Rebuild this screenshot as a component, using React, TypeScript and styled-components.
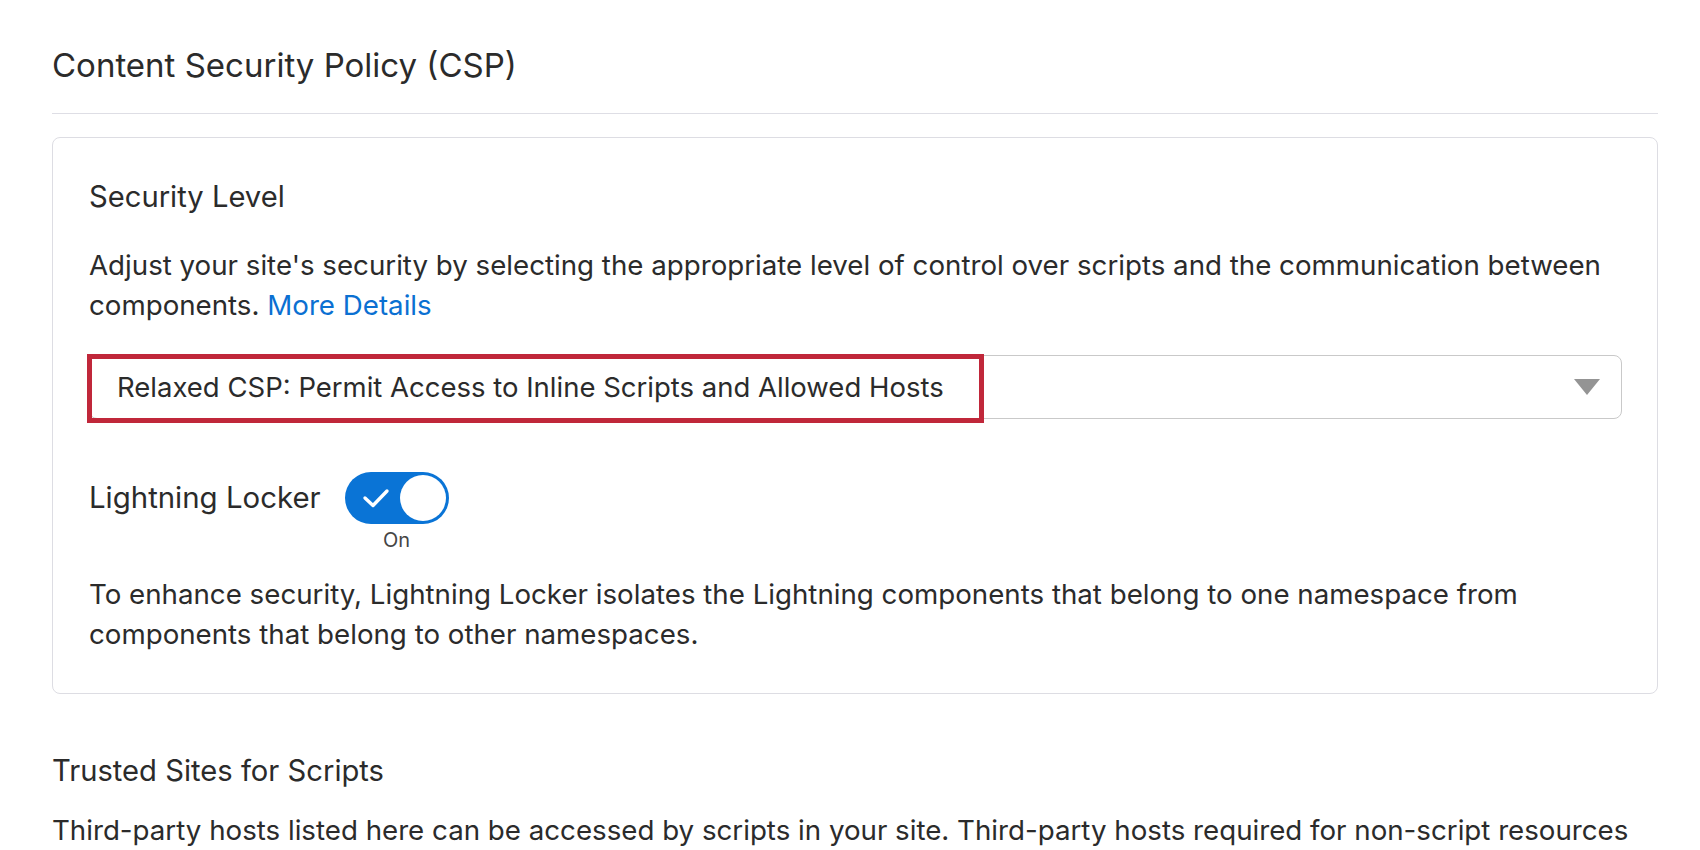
import React from 'react';
import styled, { createGlobalStyle } from 'styled-components';

const GlobalStyle = createGlobalStyle`
  html, body {
    margin: 0;
    padding: 0;
    background: #ffffff;
  }
  body {
    font-family: Inter, "Liberation Sans", Arial, sans-serif;
    color: #2b2b2b;
    -webkit-font-smoothing: antialiased;
  }
`;

const Page = styled.div`
  box-sizing: border-box;
  height: 850px;
  overflow: hidden;
  padding: 45px 42px 0 52px;
`;

const Title = styled.h1`
  margin: 0;
  font-size: 33px;
  font-weight: 400;
  line-height: 40px;
`;

const Divider = styled.div`
  height: 1px;
  margin-top: 28px;
  background: #dedee5;
`;

const Card = styled.section`
  margin-top: 23px;
  border: 1px solid #dddde3;
  border-radius: 8px;
  padding: 39px 35px 39px 36px;
`;

const SectionTitle = styled.h2<{ $gap?: number }>`
  margin: ${p => p.$gap ?? 0}px 0 0;
  font-size: 29.2px;
  font-weight: 400;
  line-height: 40px;
`;

const Text = styled.p<{ $gap: number }>`
  margin: ${p => p.$gap}px 0 0;
  font-size: 27.7px;
  line-height: 40px;
`;

const Link = styled.a`
  color: #0b70d2;
  text-decoration: none;
`;

const Select = styled.div`
  position: relative;
  box-sizing: border-box;
  display: flex;
  align-items: center;
  justify-content: space-between;
  height: 64px;
  margin-top: 30px;
  padding: 0 21px 0 27px;
  border: 1px solid #c9c9c9;
  border-radius: 8px;
  font-size: 27.5px;
`;

const Highlight = styled.span`
  position: absolute;
  left: -3px;
  top: -2px;
  width: 897px;
  height: 69px;
  box-sizing: border-box;
  border: 5px solid #c0273a;
  pointer-events: none;
`;

const ToggleRow = styled.div`
  display: flex;
  align-items: flex-start;
  gap: 24px;
  margin-top: 53px;
`;

const ToggleLabel = styled.span`
  font-size: 29.4px;
  line-height: 52px;
`;

const ToggleColumn = styled.div`
  display: flex;
  flex-direction: column;
  align-items: center;
`;

const Track = styled.div<{ $on: boolean }>`
  box-sizing: border-box;
  display: flex;
  align-items: center;
  justify-content: ${p => (p.$on ? 'space-between' : 'flex-start')};
  width: 104px;
  height: 52px;
  padding: 0 3px 0 17px;
  border-radius: 26px;
  background: ${p => (p.$on ? '#0a74d6' : '#c9c9c9')};
`;

const Knob = styled.span`
  width: 46px;
  height: 46px;
  border-radius: 50%;
  background: #ffffff;
`;

const ToggleState = styled.span`
  margin-top: 4px;
  font-size: 20px;
  line-height: 24px;
  color: #454545;
`;

const Caret = () => (
  <svg width="26" height="16" viewBox="0 0 26 16">
    <polygon points="0,0 26,0 13,16" fill="#949494" />
  </svg>
);

const Check = () => (
  <svg width="28" height="20" viewBox="0 0 28 20">
    <polyline
      points="3,10 11,17.5 25,3"
      fill="none"
      stroke="#ffffff"
      strokeWidth="3.4"
      strokeLinecap="round"
      strokeLinejoin="round"
    />
  </svg>
);

export default function App() {
  return (
    <>
      <GlobalStyle />
      <Page>
        <Title>Content Security Policy (CSP)</Title>
        <Divider />
        <Card>
          <SectionTitle>Security Level</SectionTitle>
          <Text $gap={28}>
            Adjust your site's security by selecting the appropriate level of control over scripts and the
            communication between components. <Link href="#">More Details</Link>
          </Text>
          <Select>
            <span>Relaxed CSP: Permit Access to Inline Scripts and Allowed Hosts</span>
            <Caret />
            <Highlight />
          </Select>
          <ToggleRow>
            <ToggleLabel>Lightning Locker</ToggleLabel>
            <ToggleColumn>
              <Track $on>
                <Check />
                <Knob />
              </Track>
              <ToggleState>On</ToggleState>
            </ToggleColumn>
          </ToggleRow>
          <Text $gap={22}>
            To enhance security, Lightning Locker isolates the Lightning components that belong to one namespace
            from components that belong to other namespaces.
          </Text>
        </Card>
        <SectionTitle $gap={57}>Trusted Sites for Scripts</SectionTitle>
        <Text $gap={19}>
          Third-party hosts listed here can be accessed by scripts in your site. Third-party hosts required for
          non-script resources
        </Text>
      </Page>
    </>
  );
}
